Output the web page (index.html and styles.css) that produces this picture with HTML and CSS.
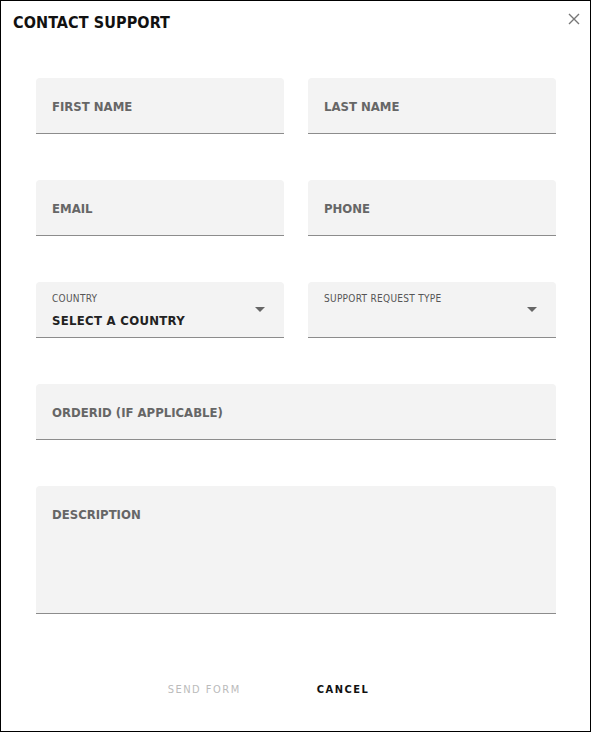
FILE: index.html
```html
<!DOCTYPE html>
<html lang="en">

<head>
    <meta charset="UTF-8">
    <meta name="viewport" content="width=device-width, initial-scale=1.0">
    <title>Contact Support</title>
    <link rel="stylesheet" href="styles.css">
</head>

<body>
    <div class="dialog">
        <div class="dialog-head">
            <h1>Contact Support</h1>
            <button class="close" type="button" aria-label="Close">
                <svg width="12" height="12" viewBox="0 0 12 12">
                    <path d="M1 1L11 11M11 1L1 11" stroke="#777" stroke-width="1.4" fill="none"/>
                </svg>
            </button>
        </div>
        <form class="supportForm" onsubmit="return false;">
            <div class="field"><span class="placeholder">First name</span></div>
            <div class="field"><span class="placeholder">Last name</span></div>
            <div class="field"><span class="placeholder">Email</span></div>
            <div class="field"><span class="placeholder">Phone</span></div>
            <div class="field select">
                <div class="select-text">
                    <span class="small-label">Country</span>
                    <span class="value">Select a country</span>
                </div>
                <span class="arrow"></span>
            </div>
            <div class="field select">
                <div class="select-text">
                    <span class="small-label">Support request type</span>
                    <span class="value"></span>
                </div>
                <span class="arrow"></span>
            </div>
            <div class="field wide"><span class="placeholder">OrderID (if applicable)</span></div>
            <div class="field wide area"><span class="placeholder">Description</span></div>
        </form>
        <div class="actions">
            <button type="submit" class="btn disabled">Send form</button>
            <button type="button" class="btn">Cancel</button>
        </div>
    </div>
</body>

</html>
```

FILE: styles.css
```css
body {
    margin: 0;
    background: #fff;
    font-family: "DejaVu Sans Condensed", "DejaVu Sans", sans-serif;
}

.dialog {
    height: 732px;
    box-sizing: border-box;
    border: 1px solid #000;
    display: flex;
    flex-direction: column;
}

.dialog-head {
    display: flex;
    justify-content: space-between;
    align-items: flex-start;
    padding: 12px 10px 0 12px;
    height: 65px;
    box-sizing: border-box;
}

.dialog-head h1 {
    margin: 0;
    font-size: 16px;
    font-weight: bold;
    letter-spacing: 0.1px;
    text-transform: uppercase;
    color: #111;
}

.close {
    border: none;
    background: none;
    padding: 0;
    width: 12px;
    height: 12px;
    cursor: pointer;
}

.supportForm {
    display: grid;
    grid-template-columns: 248px 248px;
    column-gap: 24px;
    row-gap: 46px;
    padding: 12px 0 0 35px;
}

.field {
    height: 54px;
    background: #f3f3f3;
    border-bottom: 1px solid #8c8c8c;
    border-radius: 4px 4px 0 0;
    padding: 1px 16px 0;
    display: flex;
    align-items: center;
}

.field.wide {
    grid-column: span 2;
}

.field.area {
    align-items: flex-start;
    padding-top: 21px;
    height: 106px;
}

.placeholder {
    font-size: 13px;
    font-weight: bold;
    text-transform: uppercase;
    color: #666;
}

.select {
    justify-content: space-between;
    padding-right: 19px;
    padding-top: 0;
    height: 55px;
}

.select-text {
    display: flex;
    flex-direction: column;
    gap: 9px;
    align-self: flex-start;
    padding-top: 11px;
}

.small-label {
    font-size: 10px;
    letter-spacing: 0.3px;
    text-transform: uppercase;
    color: #555;
}

.value {
    font-size: 13px;
    font-weight: bold;
    letter-spacing: 0.3px;
    text-transform: uppercase;
    color: #222;
    min-height: 16px;
}

.arrow {
    width: 0;
    height: 0;
    border-left: 5px solid transparent;
    border-right: 5px solid transparent;
    border-top: 5px solid #666;
}

.actions {
    display: flex;
    justify-content: center;
    gap: 60px;
    margin-top: 65px;
    padding-right: 54px;
}

.btn {
    border: none;
    background: none;
    font-family: inherit;
    font-size: 11px;
    font-weight: bold;
    letter-spacing: 1.5px;
    text-transform: uppercase;
    color: #111;
    padding: 4px 8px;
    cursor: pointer;
}

.btn.disabled {
    color: #bbb;
    font-weight: normal;
    cursor: default;
}
```
